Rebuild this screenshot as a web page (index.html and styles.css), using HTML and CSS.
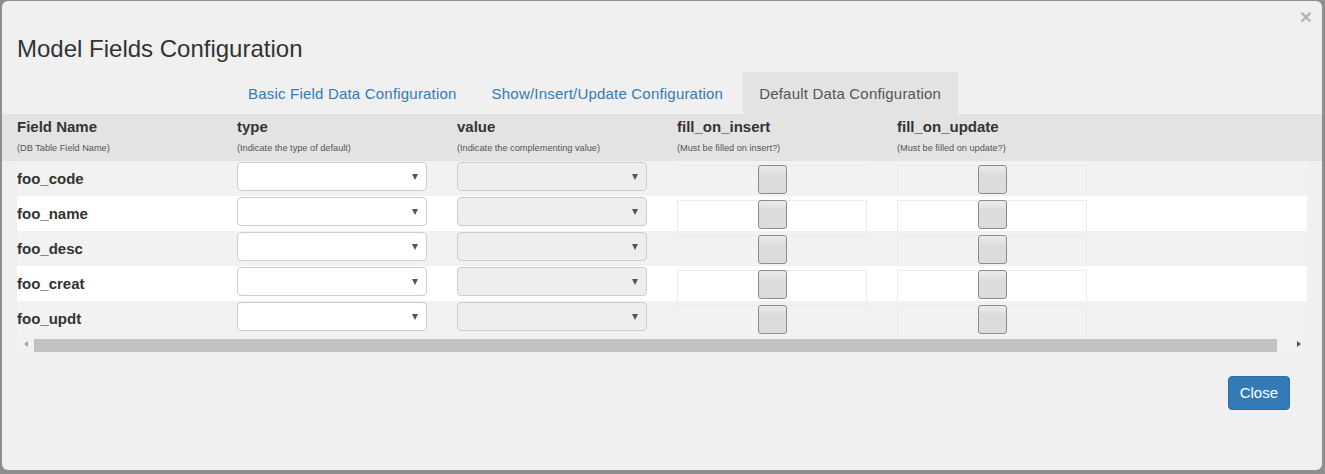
FILE: index.html
```html
<!DOCTYPE html>
<html>
<head>
<meta charset="utf-8">
<title>Model Fields Configuration</title>
<link rel="stylesheet" href="styles.css">
</head>
<body>
<div class="modal">
  <div class="modal-header">
    <h4 class="title">Model Fields Configuration</h4>
    <span class="close">×</span>
  </div>
  <ul class="tabs">
    <li class="tab">Basic Field Data Configuration</li>
    <li class="tab">Show/Insert/Update Configuration</li>
    <li class="tab active">Default Data Configuration</li>
  </ul>
  <div class="thead">
    <div class="th"><div class="th-label">Field Name</div><div class="th-sub">(DB Table Field Name)</div></div>
    <div class="th"><div class="th-label">type</div><div class="th-sub">(Indicate the type of default)</div></div>
    <div class="th"><div class="th-label">value</div><div class="th-sub">(Indicate the complementing value)</div></div>
    <div class="th"><div class="th-label">fill_on_insert</div><div class="th-sub">(Must be filled on insert?)</div></div>
    <div class="th"><div class="th-label">fill_on_update</div><div class="th-sub">(Must be filled on update?)</div></div>
  </div>
  <div class="tbody">
    <div class="row">
      <div class="cell name">foo_code</div>
      <div class="cell"><div class="select"><span class="caret"></span></div></div>
      <div class="cell"><div class="select disabled"><span class="caret"></span></div></div>
      <div class="cell"><div class="chkbox"><div class="chk"></div></div></div>
      <div class="cell"><div class="chkbox"><div class="chk"></div></div></div>
    </div>
    <div class="row">
      <div class="cell name">foo_name</div>
      <div class="cell"><div class="select"><span class="caret"></span></div></div>
      <div class="cell"><div class="select disabled"><span class="caret"></span></div></div>
      <div class="cell"><div class="chkbox"><div class="chk"></div></div></div>
      <div class="cell"><div class="chkbox"><div class="chk"></div></div></div>
    </div>
    <div class="row">
      <div class="cell name">foo_desc</div>
      <div class="cell"><div class="select"><span class="caret"></span></div></div>
      <div class="cell"><div class="select disabled"><span class="caret"></span></div></div>
      <div class="cell"><div class="chkbox"><div class="chk"></div></div></div>
      <div class="cell"><div class="chkbox"><div class="chk"></div></div></div>
    </div>
    <div class="row">
      <div class="cell name">foo_creat</div>
      <div class="cell"><div class="select"><span class="caret"></span></div></div>
      <div class="cell"><div class="select disabled"><span class="caret"></span></div></div>
      <div class="cell"><div class="chkbox"><div class="chk"></div></div></div>
      <div class="cell"><div class="chkbox"><div class="chk"></div></div></div>
    </div>
    <div class="row">
      <div class="cell name">foo_updt</div>
      <div class="cell"><div class="select"><span class="caret"></span></div></div>
      <div class="cell"><div class="select disabled"><span class="caret"></span></div></div>
      <div class="cell"><div class="chkbox"><div class="chk"></div></div></div>
      <div class="cell"><div class="chkbox"><div class="chk"></div></div></div>
    </div>
  </div>
  <div class="hscroll">
    <div class="sb-btn"><span class="arrow-left"></span></div>
    <div class="thumb"></div>
    <div class="sb-space"></div>
    <div class="sb-btn"><span class="arrow-right"></span></div>
  </div>
  <div class="footer">
    <button class="btn">Close</button>
  </div>
</div>
</body>
</html>
```
FILE: styles.css
```css
* { box-sizing: border-box; }
html, body { margin: 0; }
body {
  background: #8e8e8e;
  font-family: "Liberation Sans", Arial, sans-serif;
  color: #333;
  width: 1325px;
  height: 474px;
  padding: 1px 3px 4px 2px;
  overflow: hidden;
}
.modal {
  position: relative;
  width: 1320px;
  height: 469px;
  background: #f0f0f0;
  border-radius: 6px;
}
.modal-header {
  height: 71px;
  padding: 36px 15px 0;
}
.title {
  margin: 0;
  font-size: 24px;
  font-weight: normal;
  line-height: 24px;
  color: #333;
}
.close {
  position: absolute;
  top: 5px;
  right: 10px;
  font-size: 21px;
  font-weight: bold;
  line-height: 21px;
  color: #000;
  opacity: 0.25;
}
.tabs {
  display: flex;
  list-style: none;
  margin: 0;
  padding: 0 0 0 231px;
  height: 42px;
}
.tab {
  height: 42px;
  padding: 2px 15px 0;
  margin-right: 5px;
  line-height: 40px;
  font-size: 15px;
  letter-spacing: 0.2px;
  color: #337ab7;
}
.tab.active {
  color: #555;
  background: #e3e3e3;
  padding: 2px 17px 0 16px;
}
.thead {
  display: flex;
  height: 47px;
  background: #e3e3e3;
  padding: 3px 0 0 15px;
}
.th { width: 220px; }
.th-label {
  font-weight: bold;
  font-size: 15px;
  line-height: 20px;
  color: #333;
}
.th-sub {
  margin-top: 5px;
  font-size: 9.2px;
  line-height: 12px;
  color: #555;
}
.tbody { margin: 0 15px; }
.row {
  display: flex;
  height: 35px;
  background: #fff;
}
.row:nth-child(odd) { background: #f3f2f2; }
.cell { width: 220px; }
.cell.name {
  display: flex;
  align-items: center;
  font-weight: bold;
  font-size: 15px;
  color: #333;
}
.select {
  width: 190px;
  height: 29px;
  margin-top: 1px;
  border: 1px solid #ccc;
  border-radius: 4px;
  background: #fff;
  display: flex;
  align-items: center;
  justify-content: flex-end;
  padding-right: 8px;
}
.select.disabled { background: #eee; }
.caret {
  width: 0;
  height: 0;
  border-left: 3.5px solid transparent;
  border-right: 3.5px solid transparent;
  border-top: 6px solid #555;
}
.chkbox {
  width: 190px;
  height: 31px;
  margin-top: 4px;
  border: 1px solid #ebebeb;
  border-bottom: none;
  display: flex;
  justify-content: center;
}
.chk {
  width: 29px;
  height: 29px;
  margin-top: -1px;
  border: 1px solid #8c8c8c;
  border-radius: 3px;
  background: linear-gradient(#ececec, #dcdcdc 35%, #dcdcdc);
}
.hscroll {
  margin: 0 15px;
  height: 16px;
  background: #f1f1f1;
  display: flex;
  align-items: center;
}
.sb-btn {
  width: 17px;
  height: 16px;
  display: flex;
  align-items: center;
  justify-content: center;
}
.thumb {
  width: 1243px;
  height: 13px;
  margin-top: 2px;
  background: #c1c1c1;
}
.sb-space { flex: 1; }
.arrow-left {
  width: 0; height: 0;
  border-top: 3.5px solid transparent;
  border-bottom: 3.5px solid transparent;
  border-right: 4px solid #a3a3a3;
}
.arrow-right {
  width: 0; height: 0;
  border-top: 3.5px solid transparent;
  border-bottom: 3.5px solid transparent;
  border-left: 4px solid #505050;
}
.footer {
  display: flex;
  justify-content: flex-end;
  padding: 24px 32px 0 0;
}
.btn {
  font-family: "Liberation Sans", Arial, sans-serif;
  font-size: 15px;
  color: #fff;
  background: #337ab7;
  border: 1px solid #2e6da4;
  border-radius: 4px;
  padding: 0 11px;
  height: 34px;
  line-height: 32px;
}
```
